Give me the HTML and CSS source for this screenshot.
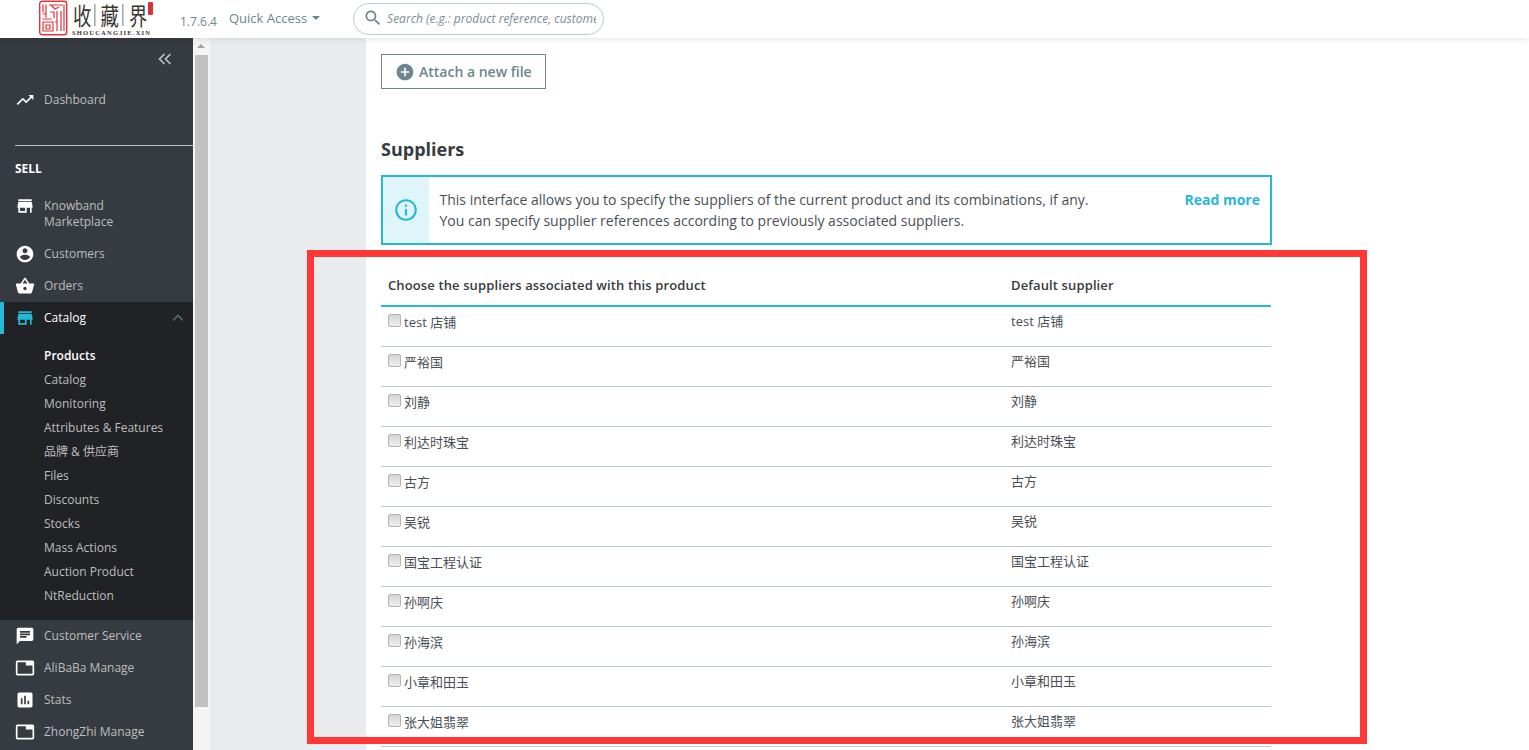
FILE: index.html
```html
<!DOCTYPE html>
<html lang="en">
<head>
<meta charset="utf-8">
<title>Product suppliers</title>
<link rel="stylesheet" href="styles.css">
</head>
<body>
<svg class="sprites" width="0" height="0" aria-hidden="true">
  <symbol id="i-trend" viewBox="0 0 24 24"><path d="M16 6l2.29 2.29-4.88 4.88-4-4L2 16.59 3.41 18l6-6 4 4 6.3-6.29L22 12V6z"/></symbol>
  <symbol id="i-store" viewBox="0 0 24 24"><path d="M20 4H4v2h16V4zm1 10v-2l-1-5H4l-1 5v2h1v6h10v-6h4v6h2v-6h1zm-9 4H6v-4h6v4z"/></symbol>
  <symbol id="i-user" viewBox="0 0 24 24"><path d="M12 2C6.48 2 2 6.48 2 12s4.48 10 10 10 10-4.48 10-10S17.52 2 12 2zm0 3c1.66 0 3 1.34 3 3s-1.34 3-3 3-3-1.34-3-3 1.34-3 3-3zm0 14.2c-2.5 0-4.71-1.28-6-3.22.03-1.99 4-3.08 6-3.08 1.99 0 5.97 1.09 6 3.08-1.29 1.94-3.5 3.22-6 3.22z"/></symbol>
  <symbol id="i-basket" viewBox="0 0 24 24"><path d="M17.21 9l-4.38-6.56c-.19-.28-.51-.42-.83-.42-.32 0-.64.14-.83.43L6.79 9H2c-.55 0-1 .45-1 1 0 .09.01.18.04.27l2.54 9.27c.23.84 1 1.46 1.92 1.46h13c.92 0 1.69-.62 1.93-1.46l2.54-9.27L23 10c0-.55-.45-1-1-1h-4.79zM9 9l3-4.4L15 9H9zm3 8c-1.1 0-2-.9-2-2s.9-2 2-2 2 .9 2 2-.9 2-2 2z"/></symbol>
  <symbol id="i-chat" viewBox="0 0 24 24"><path d="M20 2H4c-1.1 0-1.99.9-1.99 2L2 22l4-4h14c1.1 0 2-.9 2-2V4c0-1.1-.9-2-2-2zM6 9h12v2H6V9zm8 5H6v-2h8v2zm4-6H6V6h12v2z"/></symbol>
  <symbol id="i-tab" viewBox="0 0 24 24"><path d="M21 3H3c-1.1 0-2 .9-2 2v14c0 1.1.9 2 2 2h18c1.1 0 2-.9 2-2V5c0-1.1-.9-2-2-2zm0 16H3V5h10v4h8v10z"/></symbol>
  <symbol id="i-stats" viewBox="0 0 24 24"><path d="M19 3H5c-1.1 0-2 .9-2 2v14c0 1.1.9 2 2 2h14c1.1 0 2-.9 2-2V5c0-1.1-.9-2-2-2zM9 17H7v-7h2v7zm4 0h-2V7h2v10zm4 0h-2v-4h2v4z"/></symbol>
</svg>

<header class="topbar">
  <svg class="logo" width="116" height="38" viewBox="0 0 116 38" role="img" aria-label="收藏界 logo">
    <rect x="0.7" y="1.2" width="27" height="33.6" rx="2.5" fill="#fff" stroke="#e2333a" stroke-width="1.4"/>
    <path d="M4 4.5v8M7 4.5v13M4 14h3M3.5 19h9M4 22v9h10v-9zM7 25h4v4H7zM10 5h14M12 5l4 4 4-2M11 12h4v6M18 11v20M22 11v20M16 22h2M25 5v26" fill="none" stroke="#e2333a" stroke-width="1.2"/>
    <text class="logo-cn" transform="translate(34 24.5) scale(.92 1.2)">收</text>
    <rect x="55.5" y="4" width="0.8" height="22" fill="#555"/>
    <text class="logo-cn" transform="translate(61.5 24.5) scale(.92 1.2)">藏</text>
    <rect x="83.5" y="4" width="0.8" height="22" fill="#555"/>
    <text class="logo-cn" transform="translate(90 24.5) scale(.92 1.2)">界</text>
    <rect x="109" y="2" width="5" height="13" rx="1" fill="#d8333a"/>
    <text class="logo-en" x="33" y="34.5" textLength="78" lengthAdjust="spacing">SHOUCANGJIE.XIN</text>
  </svg>
  <span class="version">1.7.6.4</span>
  <span class="quick">Quick Access<span class="caret"></span></span>
  <div class="search">
    <svg class="search-icon" viewBox="0 0 24 24"><path d="M15.5 14h-.79l-.28-.27C15.41 12.59 16 11.11 16 9.5 16 5.91 13.09 3 9.5 3S3 5.91 3 9.5 5.91 16 9.5 16c1.61 0 3.09-.59 4.23-1.57l.27.28v.79l5 4.99L20.49 19l-4.99-5zm-6 0C7.01 14 5 11.99 5 9.5S7.01 5 9.5 5 14 7.01 14 9.5 11.99 14 9.5 14z"/></svg>
    <span class="search-text">Search (e.g.: product reference, customer name…)</span>
  </div>
</header>

<div class="layout">
  <nav class="sidebar">
    <div class="collapse">
      <svg width="14" height="12" viewBox="0 0 14 12"><path d="M6.5 1L1.5 6l5 5M12.5 1l-5 5 5 5" fill="none" stroke="#bcc8cc" stroke-width="1.6"/></svg>
    </div>
    <a class="item"><svg class="ico"><use href="#i-trend"/></svg>Dashboard</a>
    <div class="section">SELL</div>
    <a class="item tall"><svg class="ico"><use href="#i-store"/></svg><span>Knowband<br>Marketplace</span></a>
    <a class="item"><svg class="ico"><use href="#i-user"/></svg>Customers</a>
    <a class="item"><svg class="ico"><use href="#i-basket"/></svg>Orders</a>
    <a class="item active"><svg class="ico"><use href="#i-store"/></svg>Catalog
      <svg class="chev" width="12" height="8" viewBox="0 0 12 8"><path d="M1 6.5l5-5 5 5" fill="none" stroke="#4f6f78" stroke-width="1.6"/></svg>
    </a>
    <ul class="submenu">
      <li class="current">Products</li>
      <li>Catalog</li>
      <li>Monitoring</li>
      <li>Attributes &amp; Features</li>
      <li>品牌 &amp; 供应商</li>
      <li>Files</li>
      <li>Discounts</li>
      <li>Stocks</li>
      <li>Mass Actions</li>
      <li>Auction Product</li>
      <li>NtReduction</li>
    </ul>
    <a class="item"><svg class="ico"><use href="#i-chat"/></svg>Customer Service</a>
    <a class="item"><svg class="ico"><use href="#i-tab"/></svg>AliBaBa Manage</a>
    <a class="item"><svg class="ico"><use href="#i-stats"/></svg>Stats</a>
    <a class="item"><svg class="ico"><use href="#i-tab"/></svg>ZhongZhi Manage</a>
  </nav>

  <div class="scrollbar"><span class="arrow"></span><span class="thumb"></span></div>
  <div class="gutter"></div>

  <main class="content">
    <button class="attach" type="button">
      <svg class="attach-icon" viewBox="0 0 24 24"><path d="M12 2C6.48 2 2 6.48 2 12s4.48 10 10 10 10-4.48 10-10S17.52 2 12 2zm5 11h-4v4h-2v-4H7v-2h4V7h2v4h4v2z"/></svg>
      Attach a new file
    </button>
    <h2 class="title">Suppliers</h2>
    <div class="info">
      <div class="info-side">
        <svg class="info-icon" viewBox="0 0 24 24"><path d="M11 17h2v-6h-2v6zm1-15C6.48 2 2 6.48 2 12s4.48 10 10 10 10-4.48 10-10S17.52 2 12 2zm0 18c-4.41 0-8-3.59-8-8s3.59-8 8-8 8 3.59 8 8-3.59 8-8 8zM11 9h2V7h-2v2z"/></svg>
      </div>
      <p class="info-text">This interface allows you to specify the suppliers of the current product and its combinations, if any.<br>You can specify supplier references according to previously associated suppliers.</p>
      <a class="read-more">Read more</a>
    </div>
    <table class="suppliers">
      <thead>
        <tr><th>Choose the suppliers associated with this product</th><th>Default supplier</th></tr>
      </thead>
      <tbody>
        <tr><td><label><input type="checkbox">test 店铺</label></td><td>test 店铺</td></tr>
        <tr><td><label><input type="checkbox">严裕国</label></td><td>严裕国</td></tr>
        <tr><td><label><input type="checkbox">刘静</label></td><td>刘静</td></tr>
        <tr><td><label><input type="checkbox">利达时珠宝</label></td><td>利达时珠宝</td></tr>
        <tr><td><label><input type="checkbox">古方</label></td><td>古方</td></tr>
        <tr><td><label><input type="checkbox">吴锐</label></td><td>吴锐</td></tr>
        <tr><td><label><input type="checkbox">国宝工程认证</label></td><td>国宝工程认证</td></tr>
        <tr><td><label><input type="checkbox">孙啊庆</label></td><td>孙啊庆</td></tr>
        <tr><td><label><input type="checkbox">孙海滨</label></td><td>孙海滨</td></tr>
        <tr><td><label><input type="checkbox">小章和田玉</label></td><td>小章和田玉</td></tr>
        <tr><td><label><input type="checkbox">张大姐翡翠</label></td><td>张大姐翡翠</td></tr>
      </tbody>
    </table>
  </main>
</div>

<div class="annotation"></div>
</body>
</html>
```

FILE: styles.css
```css
* { box-sizing: border-box; }
html, body { height: 100%; }
body {
  margin: 0;
  height: 750px;
  overflow: hidden;
  background: #fff;
  color: #363a41;
  font-family: "Open Sans", "Noto Sans CJK SC", sans-serif;
  font-size: 13px;
}
.sprites { position: absolute; }

/* top bar */
.topbar {
  position: relative;
  z-index: 2;
  display: flex;
  align-items: center;
  height: 38px;
  background: #fff;
  box-shadow: 0 0 8px rgba(0, 0, 0, .14);
}
.logo { margin-left: 39px; flex: none; overflow: visible; }
.logo-cn { font-family: "Noto Sans CJK SC", sans-serif; font-size: 20px; font-weight: 400; fill: #3a3533; }
.logo-en { font-family: "Liberation Serif", serif; font-size: 6.5px; font-weight: 700; fill: #3a3533; }
.version { margin: 4px 0 0 25px; font-size: 12px; color: #6c868e; }
.quick { display: flex; align-items: center; margin: -2px 0 0 12px; font-size: 13px; color: #6c868e; }
.caret {
  margin-left: 5px;
  border-left: 4px solid transparent;
  border-right: 4px solid transparent;
  border-top: 4px solid #6c868e;
}
.search {
  display: flex;
  align-items: center;
  width: 251px;
  height: 32px;
  margin: 0 0 0 33px;
  padding: 0 7px 0 9px;
  border: 1px solid #bbcdd2;
  border-radius: 16px;
  overflow: hidden;
}
.search-icon { flex: none; width: 20px; height: 20px; fill: #6c868e; margin-top: -2px; }
.search-text {
  margin: -1px 0 0 4px;
  font-size: 12px;
  font-style: italic;
  color: #7a8d93;
  white-space: nowrap;
  overflow: hidden;
}

/* layout */
.layout { display: flex; height: 712px; }
.sidebar { flex: none; width: 193px; background: #363a41; color: #bebebe; overflow: hidden; font-size: 12px; }
.collapse { display: flex; justify-content: flex-end; align-items: center; height: 46px; padding: 0 21px 5px 0; }
.item {
  display: flex;
  align-items: center;
  height: 32px;
  padding-left: 15px;
  color: #bebebe;
  line-height: 16px;
  white-space: nowrap;
}
.ico { flex: none; width: 20px; height: 20px; margin-right: 9px; fill: #fff; }
.tall { height: 48px; align-items: flex-start; padding-top: 8px; }
.tall .ico { margin-top: -2px; }
.section {
  margin: 29px 0 0 15px;
  height: 45px;
  padding-top: 14px;
  border-top: 1px solid #bebebe;
  font-size: 12px;
  font-weight: 700;
  line-height: 17px;
  color: #fff;
}
.active {
  height: 32px;
  padding-left: 11px;
  border-left: 4px solid #25b9d7;
  background: #202226;
  color: #fff;
  position: relative;
}
.active .ico { fill: #25b9d7; }
.chev { position: absolute; right: 9px; top: 12px; }
.submenu {
  list-style: none;
  margin: 0;
  padding: 10px 0 12px 44px;
  background: #202226;
}
.submenu li { height: 24px; line-height: 24px; font-size: 12px; color: #bebebe; white-space: nowrap; }
.submenu .current { color: #fff; font-weight: 600; }

/* scrollbar */
.scrollbar { flex: none; position: relative; width: 17px; background: #f4f4f4; }
.arrow {
  position: absolute;
  left: 4px;
  top: 6px;
  border-left: 4px solid transparent;
  border-right: 4px solid transparent;
  border-bottom: 4px solid #a3a3a3;
}
.thumb { position: absolute; left: 2px; top: 17px; width: 13px; height: 652px; background: #c1c1c1; }
.gutter { flex: none; width: 156px; background: #eaebec; }

/* content */
.content { flex: 1; min-width: 0; padding: 16px 0 0 15px; background: #fff; }
.attach {
  display: flex;
  align-items: center;
  width: 165px;
  height: 35px;
  padding: 0 0 0 13px;
  border: 1px solid #6c868e;
  background: #fff;
  color: #6c868e;
  font-family: inherit;
  font-size: 14px;
  font-weight: 600;
}
.attach-icon { width: 20px; height: 20px; margin-right: 4px; fill: #6c868e; }
.title { margin: 48px 0 14px; font-size: 18px; font-weight: 700; line-height: 24px; color: #363a41; }
.info {
  display: flex;
  width: 891px;
  height: 70px;
  border: 2px solid #25b9d7;
}
.info-side {
  display: flex;
  align-items: center;
  justify-content: center;
  flex: none;
  width: 46px;
  background: #e0f5f9;
}
.info-icon { width: 26px; height: 26px; fill: #25b9d7; }
.info-text { flex: 1; margin: 12px 0 0 10.5px; font-size: 14px; line-height: 21px; color: #4a4f57; }
.read-more { margin: 12px 10px 0 0; font-size: 14px; font-weight: 700; line-height: 21px; color: #25b9d7; }

/* table */
.suppliers { width: 890px; margin-top: 21px; border-collapse: collapse; table-layout: fixed; }
.suppliers th {
  height: 40px;
  padding: 0 7px 2px;
  border-bottom: 2px solid #25b9d7;
  font-size: 13px;
  font-weight: 600;
  letter-spacing: .12px;
  text-align: left;
  color: #363a41;
}
.suppliers th:first-child, .suppliers td:first-child { width: 623px; }
.suppliers td {
  height: 40px;
  padding: 6px 7px 0;
  border-bottom: 1px solid #bbcdd2;
  vertical-align: top;
  font-size: 13px;
  line-height: 18px;
  color: #4a4f57;
}
.suppliers td:last-child { padding-top: 5px; }
.suppliers label { display: flex; align-items: flex-start; gap: 3px; }
.suppliers input {
  appearance: none;
  flex: none;
  width: 13px;
  height: 13px;
  margin: 1px 0 0;
  border: 1px solid #b4b4b4;
  border-radius: 2px;
  background: linear-gradient(#d6d6d6, #ececec);
}

/* red annotation drawn over the page */
.annotation {
  position: absolute;
  z-index: 3;
  left: 307px;
  top: 250px;
  width: 1060px;
  height: 494px;
  border: 7px solid #ff3737;
  pointer-events: none;
}
```
